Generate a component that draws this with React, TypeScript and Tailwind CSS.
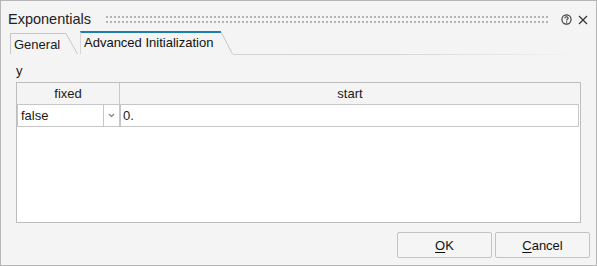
import React from "react";

function Grip() {
  return (
    <svg width="443" height="7" className="block" shapeRendering="crispEdges">
      <defs>
        <pattern id="dots" x="0" y="0" width="4" height="5" patternUnits="userSpaceOnUse">
          <rect x="0" y="0" width="2" height="2" fill="#b4b4b4" />
        </pattern>
      </defs>
      <rect x="0" y="0" width="442" height="7" fill="url(#dots)" />
    </svg>
  );
}

function HelpIcon() {
  return (
    <svg width="11" height="11" viewBox="0 0 11 11" className="block">
      <circle cx="5.5" cy="5.5" r="4.6" fill="none" stroke="#333" strokeWidth="1.1" />
      <path d="M3.9 4.3 C3.9 3.3 4.6 2.8 5.5 2.8 C6.4 2.8 7.1 3.3 7.1 4.2 C7.1 5.1 5.6 5.3 5.6 6.4" fill="none" stroke="#333" strokeWidth="1.1" />
      <rect x="5" y="7.4" width="1.2" height="1.2" fill="#333" />
    </svg>
  );
}

function CloseIcon() {
  return (
    <svg width="10" height="10" viewBox="0 0 10 10" className="block">
      <path d="M1 1 L9 9 M9 1 L1 9" stroke="#333" strokeWidth="1.2" fill="none" />
    </svg>
  );
}

export default function App() {
  const font = { fontFamily: '"Liberation Sans", Arial, sans-serif' };
  return (
    <div
      className="w-[597px] h-[266px] bg-[#f4f4f4] border border-[#b6b6b6] flex flex-col text-[#1a1a1a] overflow-hidden"
      style={font}
    >
      {/* Title bar */}
      <div className="h-[30px] flex items-center pt-[7px] pl-[7px] shrink-0">
        <span className="text-[14.5px] leading-[17px] text-[#222] w-[98px]">Exponentials</span>
        <Grip />
        <div className="ml-[12px]">
          <HelpIcon />
        </div>
        <div className="ml-[6px]">
          <CloseIcon />
        </div>
      </div>

      {/* Tab strip */}
      <div className="h-[24px] flex items-end pl-[9px] shrink-0">
        <div className="flex items-start mb-[1px]">
          <div className="h-[21px] w-[56px] border-l border-t border-[#c6c6c6] pl-[3px] pt-[3px] text-[13px] leading-[15px]">
            General
          </div>
          <svg width="12" height="21" className="block">
            <line x1="0" y1="0.5" x2="11.5" y2="21" stroke="#c6c6c6" strokeWidth="1" />
          </svg>
        </div>
        <div className="flex items-start mb-[1px] ml-[2px]">
          <div className="h-[23px] w-[141px] border-l border-l-[#d8d8d8] border-t-2 border-t-[#1b7fb2] pl-[3px] pt-[2px] text-[13px] leading-[15px] text-[#111]">
            Advanced Initialization
          </div>
          <svg width="12" height="23" className="block">
            <line x1="0" y1="1" x2="11.5" y2="23" stroke="#c6c6c6" strokeWidth="1" />
          </svg>
        </div>
        <div className="flex-1 h-[1px] mr-[14px] bg-gradient-to-r from-[#d2d2d2] via-[#d8d8d8] to-[#f4f4f4]" />
      </div>

      {/* Label */}
      <div className="mt-[8px] ml-[15px] text-[13px] leading-[15px] shrink-0">y</div>

      {/* Table */}
      <div className="mt-[4px] ml-[15px] w-[565px] h-[141px] border border-[#bdbdbd] bg-white flex flex-col shrink-0">
        <div className="h-[21px] flex bg-[#f4f4f4] text-[13px] leading-[15px]">
          <div className="w-[103px] border-r border-[#c8c8c8] flex items-center justify-center">fixed</div>
          <div className="flex-1 flex items-center justify-center">start</div>
        </div>
        <div className="h-[23px] flex text-[13px] leading-[15px]">
          <div className="w-[103px] border border-[#c6c6c6] flex">
            <div className="flex-1 flex items-center pl-[3px]">false</div>
            <div className="w-[16px] border-l border-[#c6c6c6] flex items-center justify-center">
              <svg width="7" height="5" viewBox="0 0 7 5" className="block">
                <path d="M1 1 L3.5 3.5 L6 1" stroke="#8a8a8a" strokeWidth="1.3" fill="none" />
              </svg>
            </div>
          </div>
          <div className="w-[459px] border border-[#c6c6c6] flex items-center pl-[2px]">0.</div>
        </div>
        <div className="flex-1" />
      </div>

      {/* Buttons */}
      <div className="mt-[9px] flex justify-end pr-[6px] gap-[3px] shrink-0">
        <button className="w-[95px] h-[26px] border border-[#c2c2c2] rounded-[2px] bg-[#f5f5f5] text-[13px] leading-[15px] text-[#111] flex items-center justify-center">
          <span>
            <span className="underline underline-offset-[2px]">O</span>K
          </span>
        </button>
        <button className="w-[95px] h-[26px] border border-[#c2c2c2] rounded-[2px] bg-[#f5f5f5] text-[13px] leading-[15px] text-[#111] flex items-center justify-center">
          <span>
            <span className="underline underline-offset-[2px]">C</span>ancel
          </span>
        </button>
      </div>
    </div>
  );
}
